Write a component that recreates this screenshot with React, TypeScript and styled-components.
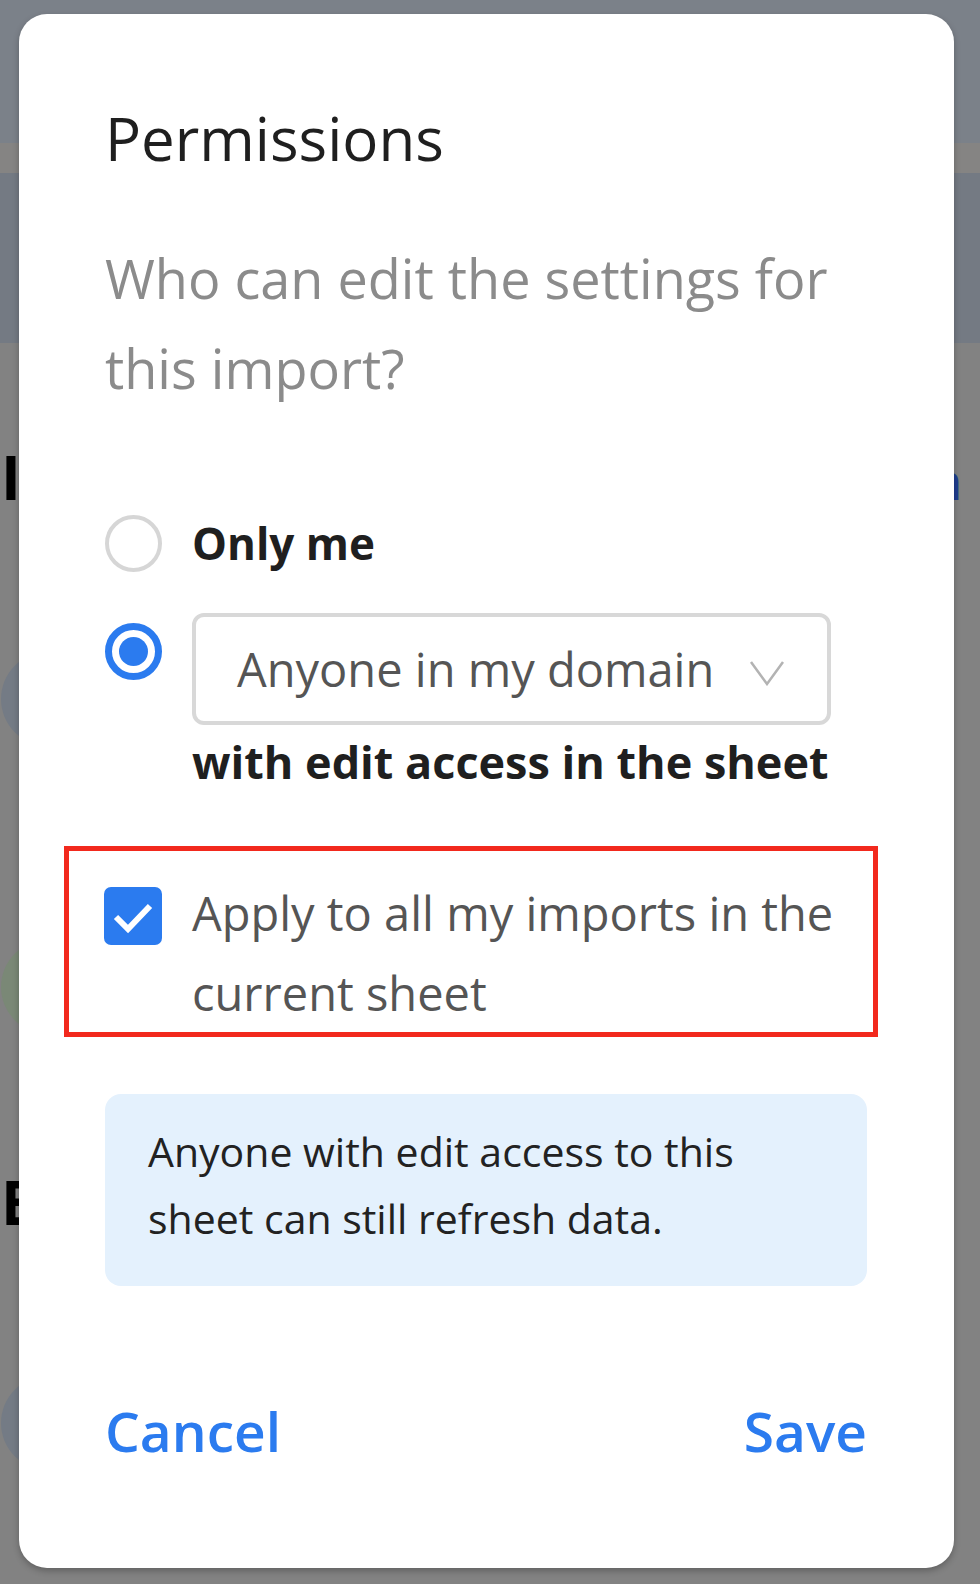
import React, { useState } from 'react'
import styled, { createGlobalStyle } from 'styled-components'

const GlobalStyle = createGlobalStyle`
  html, body {
    margin: 0;
    padding: 0;
    background: #828282;
  }
  body {
    font-family: "Open Sans", "Liberation Sans", sans-serif;
  }
`

const BLUE = '#2b7bef'

// dimmed page behind the dialog
const Backdrop = styled.div`
  position: relative;
  width: 980px;
  height: 1584px;
  overflow: hidden;
  display: flex;
  flex-direction: column;
  background: #828282;
`

const Band = styled.div<{ $h: number; $bg: string }>`
  flex: 0 0 ${({ $h }) => $h}px;
  background: ${({ $bg }) => $bg};
`

const PageBody = styled.div`
  display: flex;
  flex-direction: column;
  padding: 98px 18px 0 1px;
`

const SectionHead = styled.div<{ $gap: number }>`
  display: flex;
  align-items: baseline;
  justify-content: space-between;
  margin-top: ${({ $gap }) => $gap}px;
  height: 72px;
`

const SectionTitle = styled.h2`
  margin: 0;
  font-size: 60px;
  line-height: 72px;
  font-weight: 700;
  color: #000;
`

const SectionLink = styled.span`
  font-size: 48px;
  font-weight: 600;
  color: #1f3d8f;
`

const Avatar = styled.div<{ $gap: number; $bg: string }>`
  width: 94px;
  height: 94px;
  margin-top: ${({ $gap }) => $gap}px;
  border-radius: 50%;
  background: ${({ $bg }) => $bg};
`

// dialog
const Modal = styled.div`
  position: absolute;
  top: 14px;
  left: 19px;
  width: 935px;
  height: 1554px;
  box-sizing: border-box;
  padding: 87px 87px 0 86px;
  display: flex;
  flex-direction: column;
  background: #fff;
  border-radius: 28px;
  box-shadow: 0 3px 6px rgba(0, 0, 0, 0.25);
`

const Title = styled.h1`
  margin: 0;
  font-size: 60px;
  line-height: 74px;
  font-weight: 500;
  color: #1f1f1f;
`

const Subtitle = styled.p`
  margin: 58px 0 0;
  font-size: 54px;
  line-height: 90px;
  color: #8b8b8b;
`

const Options = styled.div`
  display: flex;
  flex-direction: column;
  margin-top: 102px;
`

const OptionRow = styled.label<{ $top?: boolean }>`
  display: flex;
  align-items: ${({ $top }) => ($top ? 'flex-start' : 'center')};
  gap: 30px;
  cursor: pointer;

  & + & {
    margin-top: 41px;
  }
`

const Radio = styled.span<{ $checked: boolean; $offset?: number }>`
  flex: 0 0 57px;
  width: 57px;
  height: 57px;
  box-sizing: border-box;
  margin-top: ${({ $offset }) => $offset || 0}px;
  border-radius: 50%;
  border: ${({ $checked }) => ($checked ? `7px solid ${BLUE}` : '4px solid #d6d6d6')};
  display: flex;
  align-items: center;
  justify-content: center;

  &::after {
    content: '';
    width: 29px;
    height: 29px;
    border-radius: 50%;
    background: ${BLUE};
    display: ${({ $checked }) => ($checked ? 'block' : 'none')};
  }
`

const OptionLabel = styled.span`
  font-size: 44px;
  line-height: 57px;
  font-weight: 700;
  color: #1f1f1f;
`

const DomainColumn = styled.div`
  display: flex;
  flex-direction: column;
`

const Select = styled.div`
  width: 639px;
  height: 112px;
  box-sizing: border-box;
  padding: 0 42px 0 41px;
  border: 4px solid #d8d8d8;
  border-radius: 12px;
  display: flex;
  align-items: center;
  justify-content: space-between;
`

const SelectValue = styled.span`
  font-size: 47px;
  line-height: 104px;
  color: #555;
`

const Chevron = styled.svg`
  margin-top: 8px;
`

const Caption = styled.span`
  margin-top: 7px;
  font-size: 45px;
  line-height: 60px;
  font-weight: 700;
  color: #1f1f1f;
`

const Highlight = styled.div`
  margin: 54px -11px 0 -41px;
  padding: 22px 20px 0 35px;
  height: 191px;
  box-sizing: border-box;
  border: 5px solid #f2291d;
`

const CheckRow = styled.label`
  display: flex;
  align-items: flex-start;
  gap: 30px;
  cursor: pointer;
`

const CheckBox = styled.span<{ $checked: boolean }>`
  flex: 0 0 58px;
  width: 58px;
  height: 58px;
  margin-top: 14px;
  border-radius: 7px;
  background: ${({ $checked }) => ($checked ? BLUE : '#fff')};
  display: flex;
  align-items: center;
  justify-content: center;
`

const CheckText = styled.span`
  font-size: 47px;
  line-height: 80px;
  color: #555;
`

const Note = styled.div`
  margin-top: 57px;
  padding: 24px 50px 34px 43px;
  background: #e4f1fd;
  border-radius: 16px;
  font-size: 41px;
  line-height: 67px;
  color: #222;
`

const Footer = styled.div`
  margin-top: 110px;
  display: flex;
  justify-content: space-between;
`

const TextButton = styled.button`
  padding: 0;
  border: none;
  background: none;
  font-family: inherit;
  font-size: 55px;
  line-height: 70px;
  font-weight: 600;
  color: ${BLUE};
  cursor: pointer;
`

const App: React.FC = () => {
  const [choice, setChoice] = useState<'me' | 'domain'>('domain')
  const [applyAll, setApplyAll] = useState(true)

  return (
    <>
      <GlobalStyle />
      <Backdrop>
        <Band $h={143} $bg="#7b8189" />
        <Band $h={30} $bg="#858483" />
        <Band $h={170} $bg="#747a83" />
        <PageBody>
          <SectionHead $gap={0}>
            <SectionTitle>Imports</SectionTitle>
            <SectionLink>Open</SectionLink>
          </SectionHead>
          <Avatar $gap={139} $bg="#747b85" />
          <Avatar $gap={194} $bg="#7a8876" />
          <SectionHead $gap={132}>
            <SectionTitle>Edit</SectionTitle>
          </SectionHead>
          <Avatar $gap={138} $bg="#747b85" />
        </PageBody>

        <Modal>
          <Title>Permissions</Title>
          <Subtitle>Who can edit the settings for this import?</Subtitle>

          <Options>
            <OptionRow onClick={() => setChoice('me')}>
              <Radio $checked={choice === 'me'} />
              <OptionLabel>Only me</OptionLabel>
            </OptionRow>
            <OptionRow $top onClick={() => setChoice('domain')}>
              <Radio $checked={choice === 'domain'} $offset={10} />
              <DomainColumn>
                <Select>
                  <SelectValue>Anyone in my domain</SelectValue>
                  <Chevron width="36" height="26" viewBox="0 0 36 26">
                    <polyline points="2,2 18,24 34,2" fill="none" stroke="#b3b3b3" strokeWidth="2.5" />
                  </Chevron>
                </Select>
                <Caption>with edit access in the sheet</Caption>
              </DomainColumn>
            </OptionRow>
          </Options>

          <Highlight>
            <CheckRow onClick={() => setApplyAll(!applyAll)}>
              <CheckBox $checked={applyAll}>
                {applyAll && (
                  <svg width="58" height="58" viewBox="0 0 58 58">
                    <polyline points="12,30 24,42 46,19" fill="none" stroke="#fff" strokeWidth="6" />
                  </svg>
                )}
              </CheckBox>
              <CheckText>Apply to all my imports in the current sheet</CheckText>
            </CheckRow>
          </Highlight>

          <Note>Anyone with edit access to this sheet can still refresh data.</Note>

          <Footer>
            <TextButton>Cancel</TextButton>
            <TextButton>Save</TextButton>
          </Footer>
        </Modal>
      </Backdrop>
    </>
  )
}

export default App
